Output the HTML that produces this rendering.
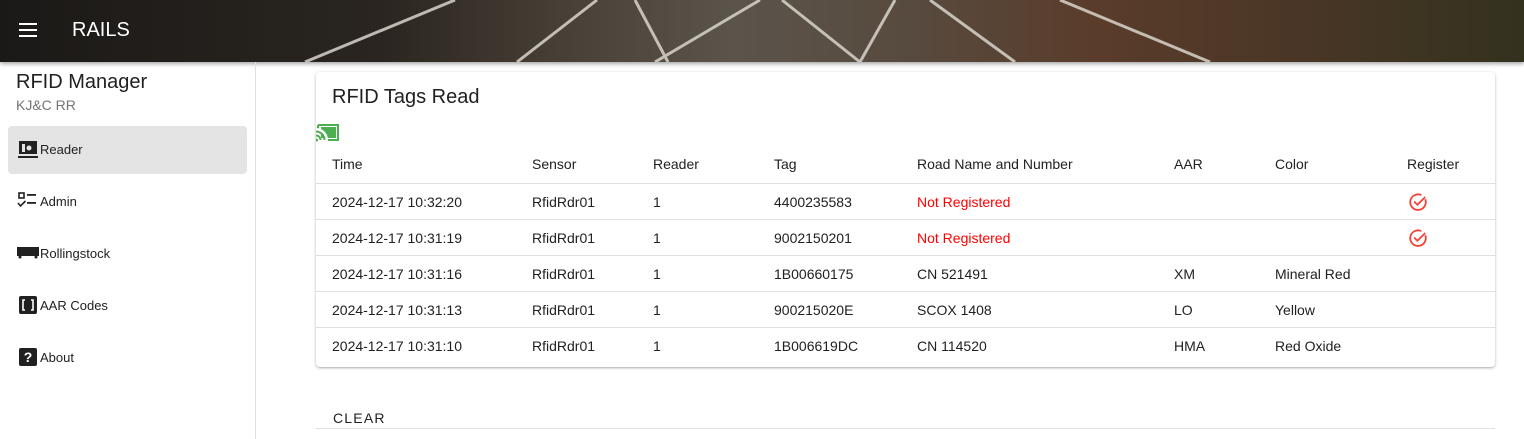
<!DOCTYPE html>
<html><head><style>
*{margin:0;padding:0;box-sizing:border-box}
body{width:1524px;height:439px;overflow:hidden;background:#fff;font-family:"Liberation Sans",Roboto,sans-serif;color:#212121;position:relative}
.hdr{position:absolute;left:0;top:0;width:1524px;height:62px;background:linear-gradient(90deg,#1b1917 0%,#2a2520 25%,#4a4238 38%,#5b544b 48%,#574a3e 60%,#5a3c2a 72%,#4a3626 85%,#33321f 100%);box-shadow:0 2px 4px rgba(0,0,0,.35)}
.hdr svg{position:absolute;left:0;top:0}
.title{position:absolute;left:72px;top:19px;color:#fff;font-size:20px}
.menu{position:absolute;left:19px;top:23px;width:18px}
.menu i{display:block;height:2px;background:#fff;margin-bottom:4px}
.side{position:absolute;left:0;top:62px;width:256px;height:377px;border-right:1px solid #e0e0e0}
.side h1{position:absolute;left:16px;top:9px;font-size:20px;font-weight:normal;color:#212121}
.side .sub{position:absolute;left:16px;top:35px;font-size:14px;color:#757575}
.item{position:absolute;left:8px;width:239px;height:48px;border-radius:4px;font-size:13px;color:#212121}
.item.act{background:#e4e4e4}
.item svg{position:absolute;left:9px;top:14px}
.item span{position:absolute;left:32px;top:16px}
.card{position:absolute;left:316px;top:72px;width:1179px;height:295px;background:#fff;border-radius:4px;box-shadow:0 1px 3px rgba(0,0,0,.25),0 1px 1px rgba(0,0,0,.1)}
.card h2{position:absolute;left:16px;top:14px;font-size:20px;font-weight:normal}
.row{position:absolute;left:0;width:1179px;height:36px;border-bottom:1px solid #e0e0e0;font-size:14px}
.row span{position:absolute;top:10px}
.red{color:#f00}
.clear{position:absolute;left:333px;top:410px;font-size:14px;letter-spacing:1.2px;color:#212121}
.line{position:absolute;left:316px;top:428px;width:1179px;height:1px;background:#e0e0e0}
</style></head><body>
<div class="hdr">
<svg width="1524" height="62">
<g stroke="#d8d4cc" stroke-width="3" opacity=".85">
<line x1="455" y1="0" x2="305" y2="62"/>
<line x1="597" y1="0" x2="517" y2="62"/>
<line x1="635" y1="0" x2="668" y2="62"/>
<line x1="760" y1="0" x2="655" y2="62"/>
<line x1="782" y1="0" x2="860" y2="62"/>
<line x1="895" y1="0" x2="860" y2="62"/>
<line x1="930" y1="0" x2="1015" y2="62"/>
<line x1="1060" y1="0" x2="1210" y2="62"/>
</g>
</svg>
<div class="menu"><i></i><i></i><i></i></div>
<div class="title">RAILS</div>
</div>
<div class="side">
<h1>RFID Manager</h1>
<div class="sub">KJ&amp;C RR</div>
<div class="item act" style="top:64px"><svg width="22" height="20" viewBox="0 0 22 20"><rect x="2" y="1" width="18" height="13" fill="#212121"/><rect x="5" y="4" width="3" height="8" fill="#e4e4e4"/><circle cx="12" cy="8" r="2.5" fill="#e4e4e4"/><rect x="1" y="16" width="20" height="2" fill="#212121"/></svg><span>Reader</span></div>
<div class="item" style="top:116px"><svg width="22" height="20" viewBox="0 0 22 20"><rect x="2" y="1" width="5" height="5" fill="none" stroke="#212121" stroke-width="1.6"/><path d="M1 11l2.5 3 5-5" fill="none" stroke="#212121" stroke-width="1.6"/><rect x="10" y="2" width="9" height="1.8" fill="#212121"/><rect x="10" y="10" width="9" height="1.8" fill="#212121"/></svg><span>Admin</span></div>
<div class="item" style="top:168px"><svg width="24" height="20" viewBox="0 0 24 20"><rect x="0" y="3" width="22" height="9" fill="#212121"/><circle cx="3" cy="13" r="1.5" fill="#212121"/><circle cx="19" cy="13" r="1.5" fill="#212121"/></svg><span>Rollingstock</span></div>
<div class="item" style="top:220px"><svg width="22" height="20" viewBox="0 0 22 20"><rect x="2" y="0" width="18" height="18" rx="2" fill="#212121"/><path d="M8 4H6v10h2M14 4h2v10h-2" fill="none" stroke="#fff" stroke-width="1.6"/></svg><span>AAR Codes</span></div>
<div class="item" style="top:272px"><svg width="22" height="20" viewBox="0 0 22 20"><rect x="2" y="0" width="18" height="18" rx="2" fill="#212121"/><text x="11" y="14" font-size="14" font-weight="bold" fill="#fff" text-anchor="middle" font-family="Liberation Sans">?</text></svg><span>About</span></div>
</div>
<div class="card">
<h2>RFID Tags Read</h2>
<svg style="position:absolute;left:0;top:52px" width="24" height="18" viewBox="0 0 24 18"><path d="M2 1H22V16H12" fill="none" stroke="#4caf50" stroke-width="2"/><path d="M2 1V5" stroke="#4caf50" stroke-width="2"/><rect x="5" y="3" width="15" height="11" fill="#4caf50"/><path d="M0 6a10 10 0 0 1 10 10" fill="none" stroke="#fff" stroke-width="4"/><path d="M0 7.5a8.5 8.5 0 0 1 8.5 8.5M0 11.5a4.5 4.5 0 0 1 4.5 4.5" fill="none" stroke="#4caf50" stroke-width="2"/><circle cx="0.5" cy="16" r="1.5" fill="#4caf50"/></svg>
<div class="row" style="top:74px;height:38px"><span style="left:16px;top:10px">Time</span><span style="left:216px;top:10px">Sensor</span><span style="left:337px;top:10px">Reader</span><span style="left:458px;top:10px">Tag</span><span style="left:601px;top:10px">Road Name and Number</span><span style="left:858px;top:10px">AAR</span><span style="left:959px;top:10px">Color</span><span style="left:1091px;top:10px">Register</span></div>
<div class="row" style="top:112px"><span style="left:16px">2024-12-17 10:32:20</span><span style="left:216px">RfidRdr01</span><span style="left:337px">1</span><span style="left:458px">4400235583</span><span style="left:601px" class="red">Not Registered</span><svg style="position:absolute;left:1092px;top:8px" width="20" height="20" viewBox="0 0 18 18"><path d="M15.5 6.5A7 7 0 1 1 12 2.8" fill="none" stroke="#f44336" stroke-width="1.6"/><path d="M5.5 8.5l3 3 7-7" fill="none" stroke="#f44336" stroke-width="1.6"/></svg></div>
<div class="row" style="top:148px"><span style="left:16px">2024-12-17 10:31:19</span><span style="left:216px">RfidRdr01</span><span style="left:337px">1</span><span style="left:458px">9002150201</span><span style="left:601px" class="red">Not Registered</span><svg style="position:absolute;left:1092px;top:8px" width="20" height="20" viewBox="0 0 18 18"><path d="M15.5 6.5A7 7 0 1 1 12 2.8" fill="none" stroke="#f44336" stroke-width="1.6"/><path d="M5.5 8.5l3 3 7-7" fill="none" stroke="#f44336" stroke-width="1.6"/></svg></div>
<div class="row" style="top:184px"><span style="left:16px">2024-12-17 10:31:16</span><span style="left:216px">RfidRdr01</span><span style="left:337px">1</span><span style="left:458px">1B00660175</span><span style="left:601px">CN 521491</span><span style="left:858px">XM</span><span style="left:959px">Mineral Red</span></div>
<div class="row" style="top:220px"><span style="left:16px">2024-12-17 10:31:13</span><span style="left:216px">RfidRdr01</span><span style="left:337px">1</span><span style="left:458px">900215020E</span><span style="left:601px">SCOX 1408</span><span style="left:858px">LO</span><span style="left:959px">Yellow</span></div>
<div class="row" style="top:256px;border-bottom:none"><span style="left:16px">2024-12-17 10:31:10</span><span style="left:216px">RfidRdr01</span><span style="left:337px">1</span><span style="left:458px">1B006619DC</span><span style="left:601px">CN 114520</span><span style="left:858px">HMA</span><span style="left:959px">Red Oxide</span></div>
</div>
<div class="clear">CLEAR</div>
<div class="line"></div>
</body></html>
